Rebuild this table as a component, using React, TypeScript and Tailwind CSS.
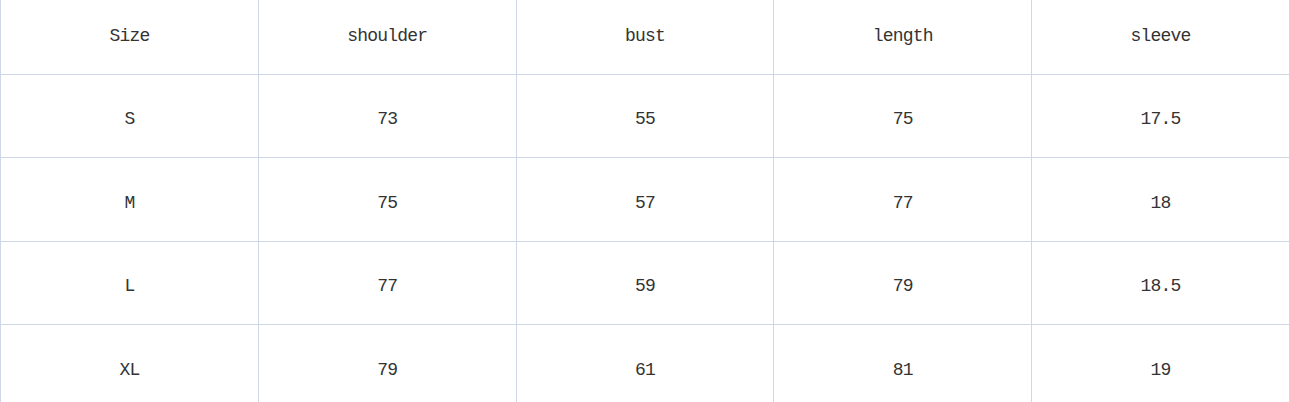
const headers = ["Size", "shoulder", "bust", "length", "sleeve"];

const rows = [
  ["S", "73", "55", "75", "17.5"],
  ["M", "75", "57", "77", "18"],
  ["L", "77", "59", "79", "18.5"],
  ["XL", "79", "61", "81", "19"],
];

export default function App() {
  return (
    <div className="w-[1290px] h-[402px] overflow-hidden bg-white">
      <table
        className="w-[1290px] table-fixed border-collapse text-[18px] tracking-[-0.8px] text-[#333]"
        style={{ fontFamily: '"Liberation Mono", "DejaVu Sans Mono", monospace' }}
      >
        <tbody>
          <tr className="h-[74px]">
            {headers.map((h) => (
              <td
                key={h}
                className="border border-t-0 border-[#cfd6e6] text-center align-middle pt-0"
              >
                {h}
              </td>
            ))}
          </tr>
          {rows.map((row) => (
            <tr key={row[0]} className="h-[83.5px]">
              {row.map((cell, i) => (
                <td
                  key={i}
                  className="border border-[#cfd6e6] text-center align-middle pt-[8px]"
                >
                  {cell}
                </td>
              ))}
            </tr>
          ))}
        </tbody>
      </table>
    </div>
  );
}
